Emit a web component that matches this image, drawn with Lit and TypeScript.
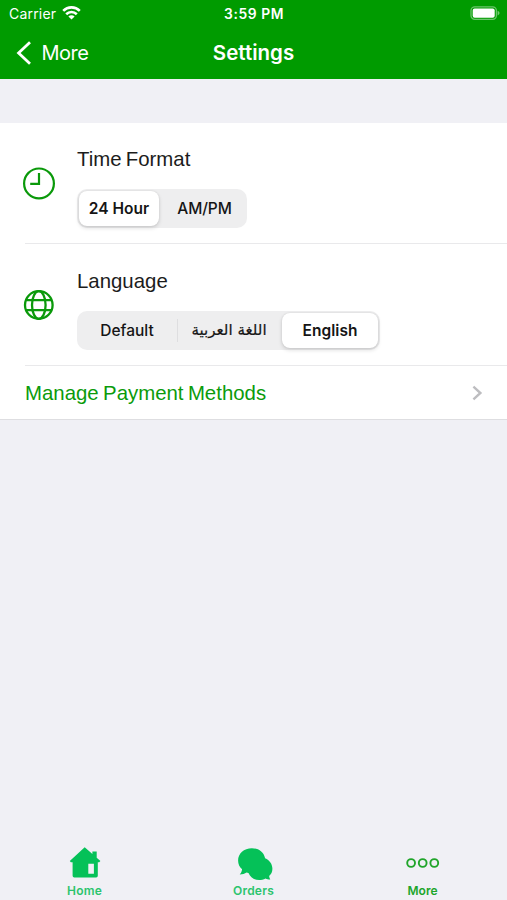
import { LitElement, html, css, svg } from "lit";
import { customElement, property } from "lit/decorators.js";
import { classMap } from "lit/directives/class-map.js";

@customElement("segmented-control")
class SegmentedControl extends LitElement {
  @property({ attribute: false }) options: { label: string; width: number; arabic?: boolean; divider?: boolean }[] = [];
  @property({ type: Number }) selected = 0;

  static styles = css`
    :host { display: flex; }
    .track {
      display: flex; height: 39px; box-sizing: border-box; padding: 2px;
      border-radius: 10px; background: #eeeeef;
    }
    .segment {
      display: flex; align-items: center; justify-content: center; box-sizing: border-box;
      height: 35px; border-radius: 8px; white-space: nowrap;
      font: 500 15.5px/20px Inter, sans-serif; letter-spacing: -0.1px; color: #151515;
    }
    .segment:first-child:not(.on) { padding-right: 2px; letter-spacing: 0; }
    .segment:last-child:not(.on) { padding-left: 5px; }
    .segment.on {
      background: #fff; font-weight: 600; letter-spacing: 0.05px;
      box-shadow: 0 2px 4px rgba(0, 0, 0, 0.14), 0 0 2px rgba(0, 0, 0, 0.1);
    }
    .arabic {
      font: 400 15.1px/20px "DejaVu Sans", sans-serif; letter-spacing: 0;
      -webkit-text-stroke: 0.2px #151515; padding: 0 2px 2px 0;
    }
    .divider { width: 1px; height: 23px; margin: 6px 0; background: #dedee0; }
  `;

  render() {
    return html`<div class="track">
      ${this.options.map(
        (o, i) => html`<div
            class=${classMap({ segment: true, on: i === this.selected, arabic: !!o.arabic })}
            style="width:${o.width}px"
          >${o.label}</div>${o.divider ? html`<div class="divider"></div>` : ""}`
      )}
    </div>`;
  }
}

const wifi = svg`<svg width="19" height="15" viewBox="0 0 19 15" fill="none" stroke="#fff" stroke-width="2.6">
  <path d="M1.2 4.8A11.8 11.8 0 0 1 17.8 4.8"/><path d="M4.2 8.2A7.6 7.6 0 0 1 14.8 8.2"/>
  <path d="M9.5 13.6L6.4 10.5A4.3 4.3 0 0 1 12.6 10.5Z" fill="#fff" stroke="none"/></svg>`;

const battery = svg`<svg width="30" height="15" viewBox="0 0 30 15">
  <rect x="1" y=".8" width="25.4" height="12.6" rx="3.8" fill="none" stroke="#fff" stroke-opacity=".42" stroke-width="1.3"/>
  <rect x="2.7" y="2.4" width="22" height="9.4" rx="2" fill="#fff"/>
  <path d="M27.6 4.8C30.1 5.6 30.1 8.6 27.6 9.4Z" fill="#fff" fill-opacity=".45"/></svg>`;

const clock = svg`<svg width="34" height="34" viewBox="0 0 34 34" fill="none" stroke="#0a990a" stroke-width="2.2">
  <circle cx="17" cy="17.4" r="14.9"/><path d="M17 6.9V17.9H8.2"/></svg>`;

const globe = svg`<svg width="32" height="32" viewBox="0 0 32 32" fill="none" stroke="#0a990a" stroke-width="2.3">
  <circle cx="16.8" cy="16" r="13.8"/><ellipse cx="16.8" cy="16" rx="6.8" ry="13.8"/>
  <path d="M4.3 11.2H29.3M4.3 21.2H29.3"/></svg>`;

const home = svg`<svg width="32" height="32" viewBox="0 0 32 32" fill="#05c158">
  <path fill-rule="evenodd" d="M15.7 .3L23.4 7V4.4H27.7V10.8L31.4 14.1 30.2 15.3H28.8V28.8A1.7 1.7 0 0 1 27.1 30.5H5.3A1.7 1.7 0 0 1 3.6 28.8V15.3H1.9L.8 14ZM19.3 16.7V26.8H24.9V16.7Z"/></svg>`;

const chats = svg`<svg width="36" height="34" viewBox="0 0 36 34" fill="#05c158">
  <path d="M14.9 1.2C21.6 1.2 26.7 5 28.1 11.2 32.6 13.1 35.4 17 35.4 21.7 35.4 24.8 34.2 27.2 32.1 29 32.2 30.4 32.8 31.5 33.3 32.6 31.3 32.6 29.8 32 28.6 31.4 21.7 35 14 32.4 11.5 26 10.8 25.8 10.1 25.6 9.5 25.4 7.8 26.6 5.6 27.3 2.7 27.4 4.2 25.8 4.9 24.1 5.1 22.3 2.5 20.1 1.1 17 1.1 13.5 1.1 6.5 6.9 1.2 14.9 1.2Z"/></svg>`;

const dots = svg`<svg width="34" height="12" viewBox="0 0 34 12" fill="none" stroke="#20a52a" stroke-width="1.9">
  <circle cx="5.1" cy="6" r="3.9"/><circle cx="16.7" cy="6" r="3.9"/><circle cx="28.3" cy="6" r="3.9"/></svg>`;

@customElement("app-root")
class AppRoot extends LitElement {
  static styles = css`
    :host {
      display: flex; flex-direction: column; height: 900px; width: 507px; overflow: hidden;
      background: #f0f0f5; font-family: Inter, sans-serif; color: #151515;
    }
    svg { display: block; flex: none; }
    .header { height: 79px; background: #009b00; color: #fff; flex: none; }
    .status, .nav { display: grid; grid-template-columns: 1fr auto 1fr; align-items: center; }
    .status { height: 27px; padding: 0 7px 0 9px; }
    .carrier { display: flex; align-items: center; gap: 6px; font-size: 14px; letter-spacing: 0.2px; }
    .time { padding-right: 1px; font-size: 13.8px; font-weight: 600; letter-spacing: 0.6px; }
    .status svg:last-child { justify-self: end; }
    .nav { height: 51px; padding: 0 16px; }
    .back { display: flex; align-items: center; gap: 9.5px; font-size: 20px; letter-spacing: -0.5px; }
    .title { font-size: 20.5px; font-weight: 600; letter-spacing: 0; }
    .list { margin-top: 44px; background: #fff; border-bottom: 1px solid #dedee1; }
    .row { display: flex; box-sizing: border-box; }
    .icon { width: 77px; display: flex; flex: none; box-sizing: border-box; padding-left: 22px; align-items: center; }
    .body { display: flex; flex-direction: column; gap: 18px; padding-top: 25px; }
    .body.low { padding-top: 26px; }
    .label { font: 20.4px/23px "Liberation Sans", Arial, sans-serif; word-spacing: -1.5px; color: #1c1c1c; }
    .line { height: 1px; margin-left: 25px; background: #e9e9eb; }
    .link {
      display: flex; align-items: center; justify-content: space-between; height: 53px;
      padding: 0 24px 0 25px; box-sizing: border-box;
      font: 20.4px/23px "Liberation Sans", Arial, sans-serif; word-spacing: -1.3px; color: #0b9b0b;
    }
    .link span { padding-top: 2px; }
    .tabs { display: grid; grid-template-columns: repeat(3, 1fr); margin-top: auto; height: 58px; }
    .tab { display: flex; flex-direction: column; align-items: center; color: #2cc46e; font-size: 12px; font-weight: 600; letter-spacing: 0.2px; }
    .glyph { height: 41px; display: flex; align-items: center; justify-content: center; }
    .glyph.chats { padding: 2px 0 0 2px; height: 39px; }
    .caption { line-height: 16px; }
    .tab.active { color: #20a52a; letter-spacing: 0; }
  `;

  render() {
    return html`
      <div class="header">
        <div class="status">
          <div class="carrier"><span>Carrier</span>${wifi}</div>
          <div class="time">3:59 PM</div>
          ${battery}
        </div>
        <div class="nav">
          <div class="back">
            <svg width="16" height="26" viewBox="0 0 16 26" fill="none" stroke="#fff" stroke-width="2.8"><path d="M14 2.3L2.6 13L14 23.7"/></svg>
            <span>More</span>
          </div>
          <div class="title">Settings</div>
        </div>
      </div>
      <div class="list">
        <div class="row" style="height:120px">
          <div class="icon">${clock}</div>
          <div class="body">
            <div class="label">Time Format</div>
            <segmented-control .options=${[{ label: "24 Hour", width: 80 }, { label: "AM/PM", width: 86 }]} .selected=${0}></segmented-control>
          </div>
        </div>
        <div class="line"></div>
        <div class="row" style="height:121px">
          <div class="icon">${globe}</div>
          <div class="body low">
            <div class="label">Language</div>
            <segmented-control
              .options=${[
                { label: "Default", width: 98, divider: true },
                { label: "اللغة العربية", width: 104, arabic: true },
                { label: "English", width: 96 },
              ]}
              .selected=${2}
            ></segmented-control>
          </div>
        </div>
        <div class="line"></div>
        <div class="link">
          <span>Manage Payment Methods</span>
          <svg width="11" height="16" viewBox="0 0 11 16" fill="none" stroke="#bdbdc0" stroke-width="2.4"><path d="M1.4 1.6L8.4 8L1.4 14.4"/></svg>
        </div>
      </div>
      <div class="tabs">
        <div class="tab"><div class="glyph">${home}</div><div class="caption">Home</div></div>
        <div class="tab"><div class="glyph chats">${chats}</div><div class="caption">Orders</div></div>
        <div class="tab active"><div class="glyph">${dots}</div><div class="caption">More</div></div>
      </div>
    `;
  }
}
